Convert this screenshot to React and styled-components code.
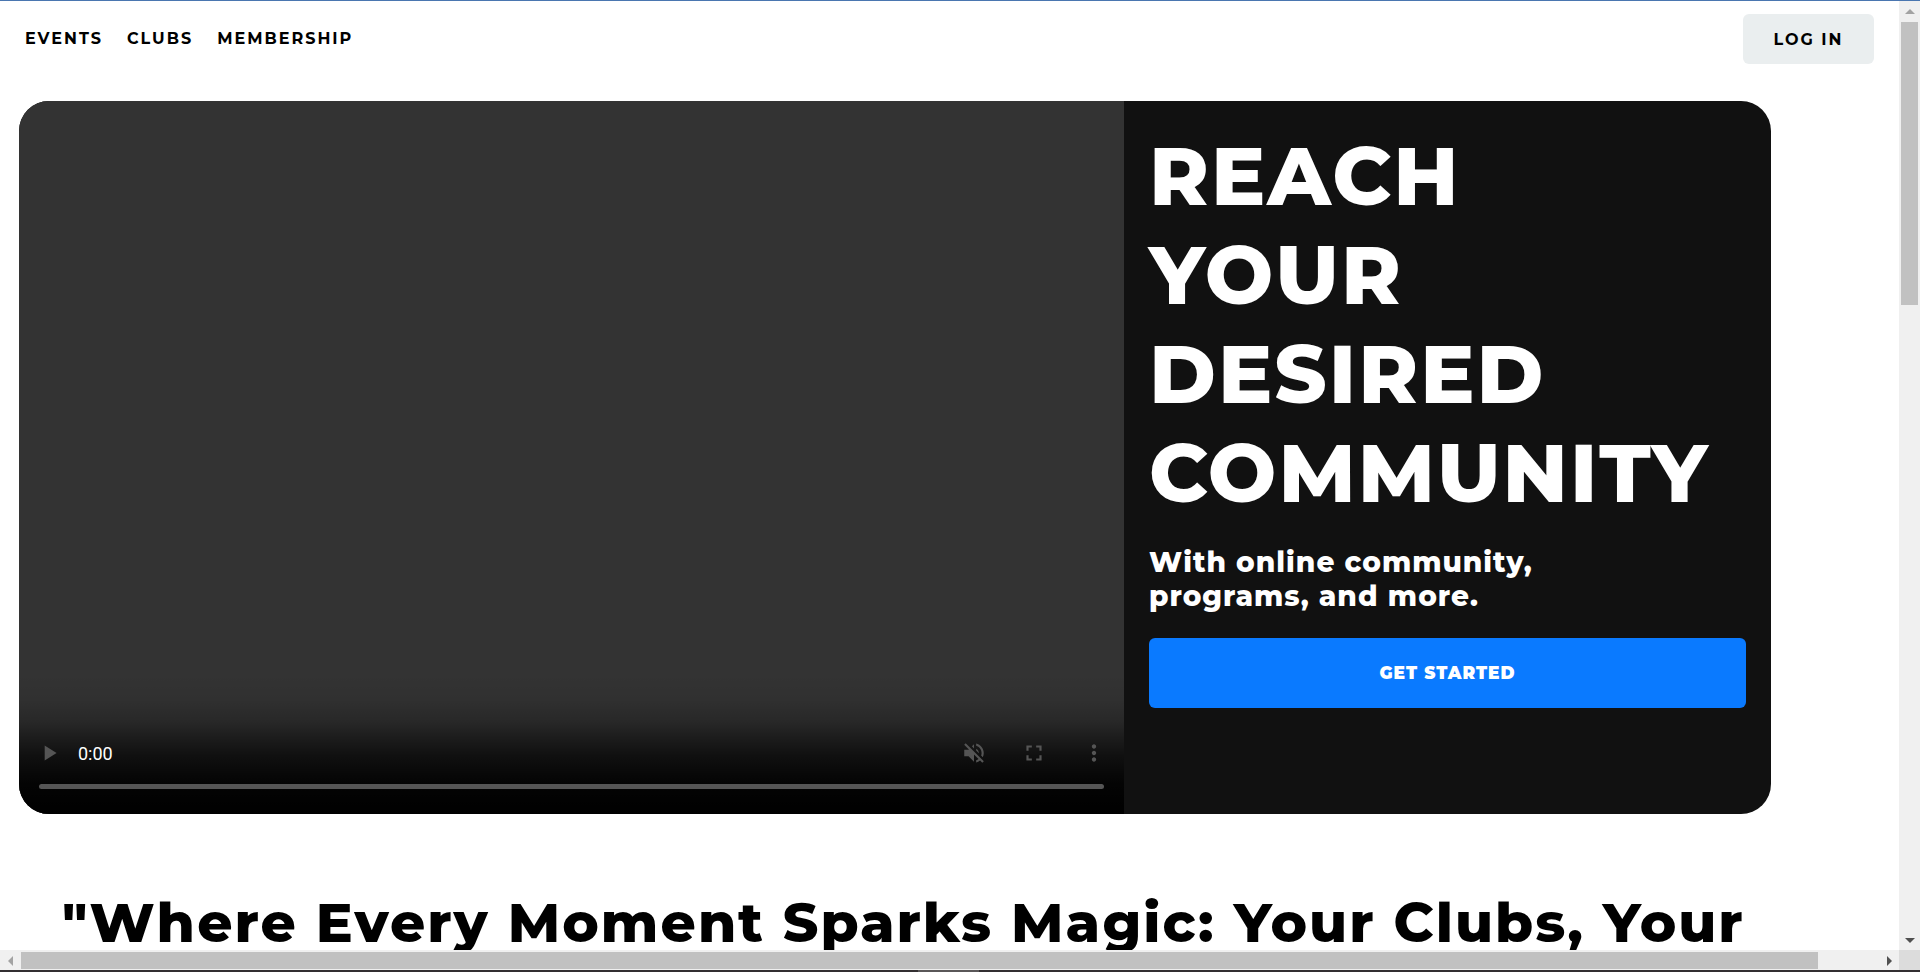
import React from "react";
import styled, { createGlobalStyle } from "styled-components";

const GlobalStyle = createGlobalStyle`
  *, *::before, *::after { box-sizing: border-box; }
  body {
    margin: 0;
    background: #fff;
    color: #000;
    font-family: Montserrat, Inter, "Open Sans", sans-serif;
  }
  h1, h2, p, ul { margin: 0; padding: 0; }
  button { font-family: inherit; border: 0; cursor: pointer; }
`;

const Frame = styled.div`
  display: grid;
  grid-template-columns: minmax(0, 1fr) 21px;
  grid-template-rows: minmax(0, 1fr) 20px 2px;
  height: 100vh;
  border-top: 1px solid #4a76b0;
  overflow: hidden;
`;

const Page = styled.div`
  overflow: hidden;
`;

const Header = styled.header`
  display: flex;
  align-items: flex-start;
  justify-content: space-between;
  padding: 13px 25px 37px;
`;

const NavList = styled.ul`
  display: flex;
  gap: 24px;
  list-style: none;
`;

const NavLink = styled.a`
  display: block;
  color: #000;
  font-size: 16px;
  font-weight: 700;
  line-height: 50px;
  letter-spacing: 2px;
  text-decoration: none;
`;

const LoginButton = styled.button`
  width: 131px;
  height: 50px;
  border-radius: 6px;
  background: #eaeeef;
  color: #000;
  font-size: 16px;
  font-weight: 700;
  letter-spacing: 2px;
`;

const Hero = styled.section`
  display: grid;
  grid-template-columns: minmax(0, 1fr) 647px;
  min-height: 713px;
  margin: 0 128px 0 19px;
  border-radius: 30px;
  overflow: hidden;
  background: #111;
`;

const Player = styled.div`
  display: flex;
  flex-direction: column;
  justify-content: flex-end;
  background: #333;
`;

const Controls = styled.div`
  display: flex;
  flex-direction: column;
  justify-content: flex-end;
  height: 140px;
  padding: 0 20px 25px;
  background: linear-gradient(
    to bottom,
    rgba(0, 0, 0, 0) 0%,
    rgba(0, 0, 0, 0.06) 18%,
    rgba(0, 0, 0, 0.22) 34%,
    rgba(0, 0, 0, 0.46) 46%,
    rgba(0, 0, 0, 0.68) 58%,
    rgba(0, 0, 0, 0.92) 78%,
    #000 100%
  );
`;

const ControlRow = styled.div`
  display: flex;
  align-items: center;
  height: 36px;
  margin: 0 -3px 13px;
`;

const IconButton = styled.button`
  display: grid;
  place-items: center;
  width: 26px;
  height: 36px;
  margin-left: ${(p) => p.$gap || 0}px;
  padding: 0;
  background: none;
  color: #555;
`;

const Time = styled.span`
  flex: 1;
  padding-left: 16px;
  color: #fff;
  font-family: Roboto, sans-serif;
  font-size: 18px;
`;

const Scrubber = styled.input`
  appearance: none;
  display: block;
  width: 100%;
  height: 5px;
  margin: 0;
  border-radius: 3px;
  background: #555;
  &::-webkit-slider-thumb {
    appearance: none;
    width: 0;
    height: 0;
  }
`;

const Pitch = styled.div`
  padding: 26px 25px;
  color: #fff;
`;

const Headline = styled.h1`
  font-size: 81px;
  font-weight: 800;
  line-height: 99px;
  letter-spacing: 2px;
  text-transform: uppercase;
`;

const Lead = styled.p`
  max-width: 440px;
  margin: 22px 0 25px;
  font-size: 28px;
  font-weight: 800;
  line-height: 34px;
  letter-spacing: 1px;
`;

const CallToAction = styled.button`
  display: block;
  width: 100%;
  height: 70px;
  border-radius: 6px;
  background: #0a7aff;
  color: #fff;
  font-size: 17px;
  font-weight: 900;
  letter-spacing: 1px;
`;

const Tagline = styled.h2`
  margin: 75px 0 0;
  padding: 0 62px;
  font-size: 55px;
  font-weight: 800;
  line-height: 68px;
  letter-spacing: 2px;
  white-space: nowrap;
`;

const Track = styled.div`
  display: flex;
  flex-direction: ${(p) => (p.$vertical ? "column" : "row")};
  align-items: stretch;
  justify-content: space-between;
  padding: ${(p) => (p.$vertical ? "0 2px" : "2px 0 1px")};
  background: #f0f0f0;
`;

const Thumb = styled.div`
  flex: 0 0 ${(p) => p.$size};
  margin: ${(p) => (p.$vertical ? "0 0 auto" : "0 auto 0 0")};
  background: #c1c1c1;
`;

const Arrow = styled.button`
  display: grid;
  place-items: center;
  flex: 0 0 21px;
  padding: 0;
  background: none;
  color: ${(p) => (p.$active ? "#505050" : "#a3a3a3")};
`;

const Corner = styled.div`
  background: #dcdcdc;
`;

const Taskbar = styled.div`
  display: flex;
  grid-column: 1 / -1;
  padding-left: 918px;
  background: #332f31;
`;

const TaskbarItem = styled.div`
  width: 61px;
  background: #5a5758;
`;

const arrowPaths = {
  up: "M0 7l5-5 5 5z",
  down: "M0 3l5 5 5-5z",
  left: "M7 0L2 5l5 5z",
  right: "M3 0l5 5-5 5z",
};

function ScrollArrow({ direction, active }) {
  return (
    <Arrow $active={active} aria-label={`Scroll ${direction}`}>
      <svg width="10" height="10" viewBox="0 0 10 10" fill="currentColor">
        <path d={arrowPaths[direction]} />
      </svg>
    </Arrow>
  );
}

const iconPaths = {
  play: "M8 5v14l11-7z",
  muted:
    "M4.34 2.93L2.93 4.34 7.29 8.7 7 9H3v6h4l5 5v-6.59l4.18 4.18c-.65.49-1.38.88-2.18 1.11v2.06c1.34-.3 2.57-.92 3.61-1.75l2.05 2.05 1.41-1.41L4.34 2.93zM19 12c0 .82-.15 1.61-.41 2.34l1.53 1.53c.56-1.17.88-2.48.88-3.87 0-4.28-2.99-7.86-7-8.77v2.06c2.89.86 5 3.54 5 6.71zM12 4l-1.88 1.88L12 7.76V4zm4.5 8c0-1.77-1.02-3.29-2.5-4.03v1.79l2.48 2.48c.01-.08.02-.16.02-.24z",
  fullscreen:
    "M7 14H5v5h5v-2H7v-3zm-2-4h2V7h3V5H5v5zm12 7h-3v2h5v-5h-2v3zM14 5v2h3v3h2V5h-5z",
  more:
    "M12 8c1.1 0 2-.9 2-2s-.9-2-2-2-2 .9-2 2 .9 2 2 2zm0 2c-1.1 0-2 .9-2 2s.9 2 2 2 2-.9 2-2-.9-2-2-2zm0 6c-1.1 0-2 .9-2 2s.9 2 2 2 2-.9 2-2-.9-2-2-2z",
};

function PlayerButton({ icon, label, gap }) {
  return (
    <IconButton aria-label={label} $gap={gap}>
      <svg width="26" height="26" viewBox="0 0 24 24" fill="currentColor">
        <path d={iconPaths[icon]} />
      </svg>
    </IconButton>
  );
}

const links = ["EVENTS", "CLUBS", "MEMBERSHIP"];

export default function App() {
  return (
    <>
      <GlobalStyle />
      <Frame>
        <Page>
          <Header>
            <nav aria-label="Main">
              <NavList>
                {links.map((name) => (
                  <li key={name}>
                    <NavLink href={`#${name.toLowerCase()}`}>{name}</NavLink>
                  </li>
                ))}
              </NavList>
            </nav>
            <LoginButton>LOG IN</LoginButton>
          </Header>
          <main>
            <Hero>
              <Player>
                <Controls>
                  <ControlRow>
                    <PlayerButton icon="play" label="Play" />
                    <Time>0:00</Time>
                    <PlayerButton icon="muted" label="Unmute" />
                    <PlayerButton icon="fullscreen" label="Full screen" gap={34} />
                    <PlayerButton icon="more" label="More options" gap={34} />
                  </ControlRow>
                  <Scrubber type="range" defaultValue="0" aria-label="Seek" />
                </Controls>
              </Player>
              <Pitch>
                <Headline>
                  Reach
                  <br />
                  your
                  <br />
                  desired
                  <br />
                  community
                </Headline>
                <Lead>
                  With online community,
                  <br />
                  programs, and more.
                </Lead>
                <CallToAction>GET STARTED</CallToAction>
              </Pitch>
            </Hero>
            <Tagline>"Where Every Moment Sparks Magic: Your Clubs, Your</Tagline>
          </main>
        </Page>
        <Track $vertical>
          <ScrollArrow direction="up" />
          <Thumb $vertical $size="283px" />
          <ScrollArrow direction="down" active />
        </Track>
        <Track>
          <ScrollArrow direction="left" />
          <Thumb $size="calc(100% - 102px)" />
          <ScrollArrow direction="right" active />
        </Track>
        <Corner />
        <Taskbar>
          <TaskbarItem />
        </Taskbar>
      </Frame>
    </>
  );
}
